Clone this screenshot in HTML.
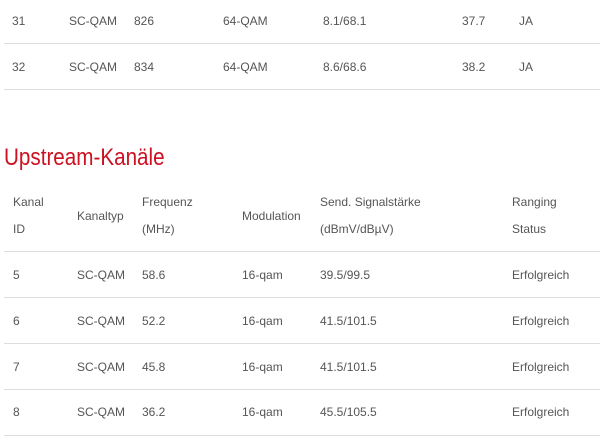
<!DOCTYPE html>
<html><head><style>
body{margin:0;width:600px;height:438px;background:#fff;font-family:"Liberation Sans",Arial,sans-serif;font-size:12px;color:#555;position:relative;overflow:hidden}
.t{position:absolute;white-space:nowrap;line-height:14px}
.l{position:absolute;left:4px;right:0;height:1px;background:#ddd}
h2{position:absolute;left:4px;top:143px;margin:0;font-weight:normal;color:#cc1122;font-size:24px;line-height:30px;transform:scaleX(0.86);transform-origin:left}
</style></head><body>
<div class="t" style="left:12px;top:14px">31</div><div class="t" style="left:69px;top:14px">SC-QAM</div><div class="t" style="left:134px;top:14px">826</div><div class="t" style="left:223px;top:14px">64-QAM</div><div class="t" style="left:323px;top:14px">8.1/68.1</div><div class="t" style="left:462px;top:14px">37.7</div><div class="t" style="left:519px;top:14px">JA</div>
<div class="l" style="top:43px"></div>
<div class="t" style="left:12px;top:60px">32</div><div class="t" style="left:69px;top:60px">SC-QAM</div><div class="t" style="left:134px;top:60px">834</div><div class="t" style="left:223px;top:60px">64-QAM</div><div class="t" style="left:323px;top:60px">8.6/68.6</div><div class="t" style="left:462px;top:60px">38.2</div><div class="t" style="left:519px;top:60px">JA</div>
<div class="l" style="top:89px"></div>
<h2>Upstream-Kanäle</h2>
<div class="t" style="left:13px;top:195px">Kanal</div><div class="t" style="left:13px;top:222px">ID</div>
<div class="t" style="left:77px;top:209px">Kanaltyp</div>
<div class="t" style="left:142px;top:195px">Frequenz</div><div class="t" style="left:142px;top:222px">(MHz)</div>
<div class="t" style="left:242px;top:209px">Modulation</div>
<div class="t" style="left:320px;top:195px">Send. Signalstärke</div><div class="t" style="left:320px;top:222px">(dBmV/dBµV)</div>
<div class="t" style="left:512px;top:195px">Ranging</div><div class="t" style="left:512px;top:222px">Status</div>
<div class="l" style="top:251px"></div>
<div class="t" style="left:13px;top:268px">5</div><div class="t" style="left:77px;top:268px">SC-QAM</div><div class="t" style="left:142px;top:268px">58.6</div><div class="t" style="left:242px;top:268px">16-qam</div><div class="t" style="left:320px;top:268px">39.5/99.5</div><div class="t" style="left:512px;top:268px">Erfolgreich</div>
<div class="l" style="top:297px"></div>
<div class="t" style="left:13px;top:314px">6</div><div class="t" style="left:77px;top:314px">SC-QAM</div><div class="t" style="left:142px;top:314px">52.2</div><div class="t" style="left:242px;top:314px">16-qam</div><div class="t" style="left:320px;top:314px">41.5/101.5</div><div class="t" style="left:512px;top:314px">Erfolgreich</div>
<div class="l" style="top:343px"></div>
<div class="t" style="left:13px;top:360px">7</div><div class="t" style="left:77px;top:360px">SC-QAM</div><div class="t" style="left:142px;top:360px">45.8</div><div class="t" style="left:242px;top:360px">16-qam</div><div class="t" style="left:320px;top:360px">41.5/101.5</div><div class="t" style="left:512px;top:360px">Erfolgreich</div>
<div class="l" style="top:389px"></div>
<div class="t" style="left:13px;top:405px">8</div><div class="t" style="left:77px;top:405px">SC-QAM</div><div class="t" style="left:142px;top:405px">36.2</div><div class="t" style="left:242px;top:405px">16-qam</div><div class="t" style="left:320px;top:405px">45.5/105.5</div><div class="t" style="left:512px;top:405px">Erfolgreich</div>
<div class="l" style="top:435px"></div>
</body></html>
